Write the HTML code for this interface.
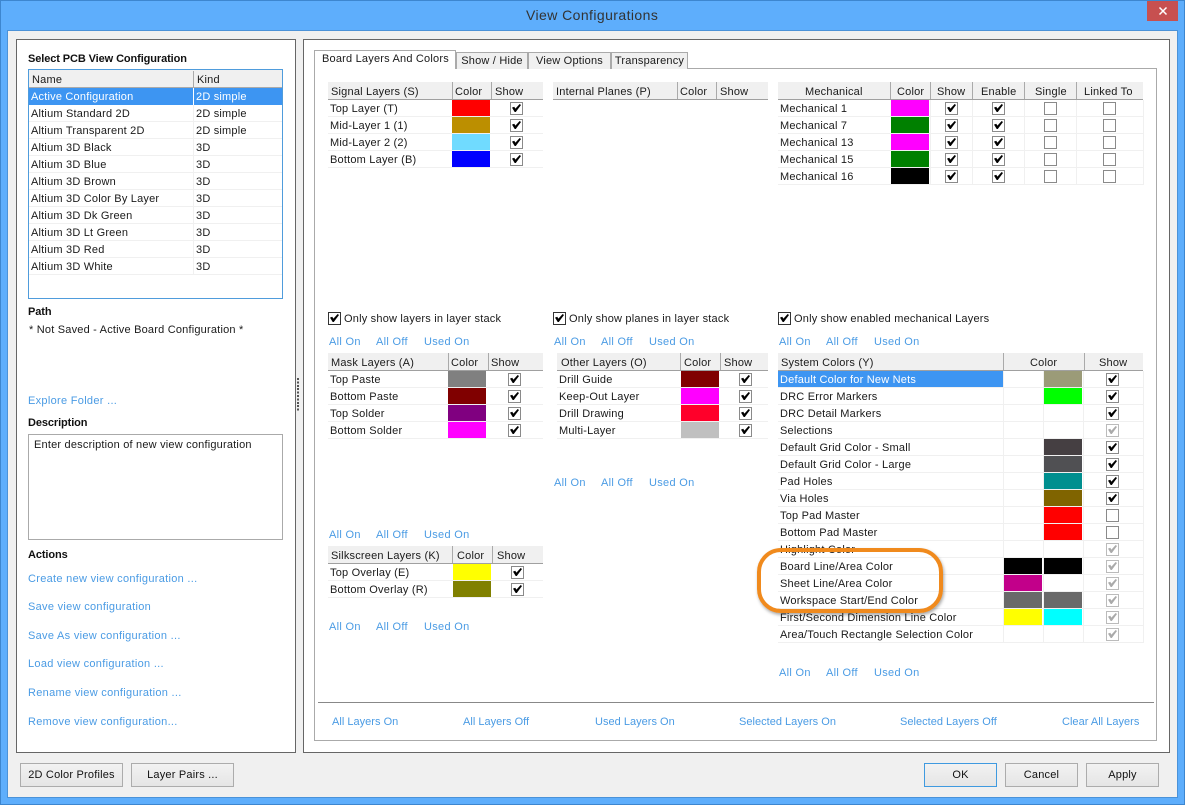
<!DOCTYPE html>
<html><head><meta charset="utf-8"><title>View Configurations</title>
<style>
html,body{margin:0;padding:0}
body{width:1185px;height:805px;position:relative;overflow:hidden;background:#5eaefc;font:11px/18px "Liberation Sans",sans-serif;letter-spacing:.2px;color:#1a1a1a}
div,span,b{position:absolute;white-space:nowrap;box-sizing:border-box}
.p{background:#fff;border:1px solid #666}
.a{color:#4a9be4;letter-spacing:.3px}
.z{letter-spacing:.02px}
.b{font-weight:bold;color:#111;letter-spacing:-.1px}
.h{background:#f0f0f0;border-bottom:1px solid #a0a0a0;height:18px}
.h span{top:1px}
.d{width:1px;background:#aaa;height:17px;top:0}
.r{height:17px;border-bottom:1px solid #f0f0f0}
.r>span.l{left:2px;top:0}
.s{top:0;height:16px;width:38px}
.c{top:2px;width:13px;height:13px;border:1px solid #8a8a8a;background:#fff}
.k::after{content:"";position:absolute;left:1px;top:1px;width:9px;height:8px;background:#000;clip-path:polygon(0 45%,25% 35%,38% 58%,85% 0,100% 12%,42% 100%,30% 100%)}
.g{border-color:#bbb}
.g::after{background:#aaa}
.v{width:1px;background:#f0f0f0}
.t{top:52px;height:17px;background:#f0f0f0;border:1px solid #aaa;border-bottom:0;text-align:center;line-height:16px}
.btn{top:763px;height:24px;width:73px;border:1px solid #acacac;background:linear-gradient(#f2f2f2,#e5e5e5);text-align:center;line-height:22px;color:#111}
</style></head><body>
<div style="left:0;top:0;width:1185px;height:805px;border:1px solid #3d86cf"></div>
<span style="left:526px;top:7px;font-size:14px;line-height:17px;letter-spacing:.42px;color:#333">View Configurations</span>
<div style="left:1147px;top:1px;width:31px;height:20px;background:#c75050"></div>
<svg style="position:absolute;left:1158px;top:6px" width="10" height="10" viewBox="0 0 10 10"><path d="M1.5 1.5L8.5 8.5M8.5 1.5L1.5 8.5" stroke="#fff" stroke-width="1.5"/></svg>
<div style="left:8px;top:31px;width:1169px;height:766px;background:#f0f0f0;box-shadow:0 0 0 1px #4b92d8"></div>

<!-- left panel -->
<div class="p" style="left:16px;top:39px;width:280px;height:714px"></div>
<span class="b" style="left:28px;top:50px">Select PCB View Configuration</span>
<div style="left:28px;top:69px;width:255px;height:230px;border:1px solid #4f9cdc;background:#fff"></div>
<div style="left:29px;top:70px;width:253px;height:18px;background:#f0f0f0;border-bottom:1px solid #aaa"></div>
<div style="left:193px;top:71px;width:1px;height:16px;background:#aaa"></div>
<span style="left:32px;top:71px">Name</span><span style="left:197px;top:71px">Kind</span>
<div style="left:29px;top:88px;width:253px;height:17px;background:#3d95f2"></div>
<div style="left:193px;top:88px;width:1px;height:187px;background:#f0f0f0"></div>
<div style="left:193px;top:88px;width:1px;height:17px;background:#fff"></div>
<div class="r" style="left:29px;top:105px;width:253px"></div><div class="r" style="left:29px;top:122px;width:253px"></div><div class="r" style="left:29px;top:139px;width:253px"></div><div class="r" style="left:29px;top:156px;width:253px"></div><div class="r" style="left:29px;top:173px;width:253px"></div><div class="r" style="left:29px;top:190px;width:253px"></div><div class="r" style="left:29px;top:207px;width:253px"></div><div class="r" style="left:29px;top:224px;width:253px"></div><div class="r" style="left:29px;top:241px;width:253px"></div><div class="r" style="left:29px;top:258px;width:253px"></div>
<span style="left:31px;top:88px;color:#fff">Active Configuration</span><span style="left:196px;top:88px;color:#fff">2D simple</span>
<span style="left:31px;top:105px">Altium Standard 2D</span><span style="left:196px;top:105px">2D simple</span>
<span style="left:31px;top:122px">Altium Transparent 2D</span><span style="left:196px;top:122px">2D simple</span>
<span style="left:31px;top:139px">Altium 3D Black</span><span style="left:196px;top:139px">3D</span>
<span style="left:31px;top:156px">Altium 3D Blue</span><span style="left:196px;top:156px">3D</span>
<span style="left:31px;top:173px">Altium 3D Brown</span><span style="left:196px;top:173px">3D</span>
<span style="left:31px;top:190px">Altium 3D Color By Layer</span><span style="left:196px;top:190px">3D</span>
<span style="left:31px;top:207px">Altium 3D Dk Green</span><span style="left:196px;top:207px">3D</span>
<span style="left:31px;top:224px">Altium 3D Lt Green</span><span style="left:196px;top:224px">3D</span>
<span style="left:31px;top:241px">Altium 3D Red</span><span style="left:196px;top:241px">3D</span>
<span style="left:31px;top:258px">Altium 3D White</span><span style="left:196px;top:258px">3D</span>
<span class="b" style="left:28px;top:303px">Path</span>
<span style="left:29px;top:321px">* Not Saved - Active Board Configuration *</span>
<span class="a" style="left:28px;top:392px">Explore Folder ...</span>
<span class="b" style="left:28px;top:414px">Description</span>
<div style="left:28px;top:434px;width:255px;height:106px;border:1px solid #aaa;background:#fff"></div>
<span style="left:34px;top:436px">Enter description of new view configuration</span>
<span class="b" style="left:28px;top:546px">Actions</span>
<span class="a" style="left:28px;top:570px">Create new view configuration ...</span>
<span class="a" style="left:28px;top:598px">Save view configuration</span>
<span class="a" style="left:28px;top:627px">Save As view configuration ...</span>
<span class="a" style="left:28px;top:655px">Load view configuration ...</span>
<span class="a" style="left:28px;top:684px">Rename view configuration ...</span>
<span class="a" style="left:28px;top:713px">Remove view configuration...</span>

<!-- splitter grip -->
<div style="left:297px;top:378px;width:2px;height:34px;background:repeating-linear-gradient(#555 0 2px,#f0f0f0 2px 3.4px)"></div>

<!-- right panel -->
<div class="p" style="left:303px;top:39px;width:867px;height:714px"></div>
<div style="left:314px;top:68px;width:843px;height:673px;border:1px solid #aaa;background:#fff"></div>
<div class="t" style="left:456px;width:72px">Show / Hide</div>
<div class="t" style="left:528px;width:83px">View Options</div>
<div class="t" style="left:611px;width:77px">Transparency</div>
<div style="left:314px;top:50px;width:142px;height:19px;background:#fff;border:1px solid #aaa;border-bottom:0"></div>
<span style="left:322px;top:50px">Board Layers And Colors</span>

<!-- Signal -->
<div class="h" style="left:328px;top:82px;width:215px"><span style="left:3px">Signal Layers (S)</span><div class="d" style="left:124px"></div><span style="left:127px">Color</span><div class="d" style="left:163px"></div><span style="left:167px">Show</span></div>
<div class="r" style="left:328px;top:100px;width:215px"><span class="l">Top Layer (T)</span><div class="s" style="left:124px;background:#f00"></div><div class="c k" style="left:182px"></div></div>
<div class="r" style="left:328px;top:117px;width:215px"><span class="l">Mid-Layer 1 (1)</span><div class="s" style="left:124px;background:#bc8f00"></div><div class="c k" style="left:182px"></div></div>
<div class="r" style="left:328px;top:134px;width:215px"><span class="l">Mid-Layer 2 (2)</span><div class="s" style="left:124px;background:#70dbff"></div><div class="c k" style="left:182px"></div></div>
<div class="r" style="left:328px;top:151px;width:215px"><span class="l">Bottom Layer (B)</span><div class="s" style="left:124px;background:#00f"></div><div class="c k" style="left:182px"></div></div>

<!-- Internal -->
<div class="h" style="left:553px;top:82px;width:215px"><span style="left:3px">Internal Planes (P)</span><div class="d" style="left:124px"></div><span style="left:127px">Color</span><div class="d" style="left:163px"></div><span style="left:167px">Show</span></div>

<!-- Mechanical -->
<div class="h" style="left:778px;top:82px;width:365px"><span style="left:27px">Mechanical</span><div class="d" style="left:112px"></div><span style="left:119px">Color</span><div class="d" style="left:152px"></div><span style="left:159px">Show</span><div class="d" style="left:194px"></div><span style="left:203px">Enable</span><div class="d" style="left:246px"></div><span style="left:257px">Single</span><div class="d" style="left:298px"></div><span style="left:306px">Linked To</span></div>
<div class="r" style="left:778px;top:100px;width:365px"><span class="l">Mechanical 1</span><div class="s" style="left:113px;background:#f0f"></div><div class="c k" style="left:167px"></div><div class="c k" style="left:214px"></div><div class="c" style="left:266px"></div><div class="c" style="left:325px"></div></div>
<div class="r" style="left:778px;top:117px;width:365px"><span class="l">Mechanical 7</span><div class="s" style="left:113px;background:#008000"></div><div class="c k" style="left:167px"></div><div class="c k" style="left:214px"></div><div class="c" style="left:266px"></div><div class="c" style="left:325px"></div></div>
<div class="r" style="left:778px;top:134px;width:365px"><span class="l">Mechanical 13</span><div class="s" style="left:113px;background:#f0f"></div><div class="c k" style="left:167px"></div><div class="c k" style="left:214px"></div><div class="c" style="left:266px"></div><div class="c" style="left:325px"></div></div>
<div class="r" style="left:778px;top:151px;width:365px"><span class="l">Mechanical 15</span><div class="s" style="left:113px;background:#008000"></div><div class="c k" style="left:167px"></div><div class="c k" style="left:214px"></div><div class="c" style="left:266px"></div><div class="c" style="left:325px"></div></div>
<div class="r" style="left:778px;top:168px;width:365px"><span class="l">Mechanical 16</span><div class="s" style="left:113px;background:#000"></div><div class="c k" style="left:167px"></div><div class="c k" style="left:214px"></div><div class="c" style="left:266px"></div><div class="c" style="left:325px"></div></div>
<div class="v" style="left:930px;top:100px;height:85px"></div><div class="v" style="left:972px;top:100px;height:85px"></div><div class="v" style="left:1024px;top:100px;height:85px"></div><div class="v" style="left:1076px;top:100px;height:85px"></div><div class="v" style="left:1143px;top:100px;height:85px"></div>

<!-- Only show -->
<div class="c k" style="left:328px;top:312px;border-color:#333"></div><span style="left:344px;top:310px">Only show layers in layer stack</span>
<div class="c k" style="left:553px;top:312px;border-color:#333"></div><span style="left:569px;top:310px">Only show planes in layer stack</span>
<div class="c k" style="left:778px;top:312px;border-color:#333"></div><span style="left:794px;top:310px">Only show enabled mechanical Layers</span>

<span class="a" style="left:329px;top:333px">All On</span><span class="a" style="left:376px;top:333px">All Off</span><span class="a" style="left:424px;top:333px">Used On</span>
<span class="a" style="left:554px;top:333px">All On</span><span class="a" style="left:601px;top:333px">All Off</span><span class="a" style="left:649px;top:333px">Used On</span>
<span class="a" style="left:779px;top:333px">All On</span><span class="a" style="left:826px;top:333px">All Off</span><span class="a" style="left:874px;top:333px">Used On</span>

<!-- Mask -->
<div class="h" style="left:328px;top:353px;width:215px"><span style="left:3px">Mask Layers (A)</span><div class="d" style="left:120px"></div><span style="left:123px">Color</span><div class="d" style="left:160px"></div><span style="left:163px">Show</span></div>
<div class="r" style="left:328px;top:371px;width:215px"><span class="l">Top Paste</span><div class="s" style="left:120px;background:#808080"></div><div class="c k" style="left:180px"></div></div>
<div class="r" style="left:328px;top:388px;width:215px"><span class="l">Bottom Paste</span><div class="s" style="left:120px;background:#800000"></div><div class="c k" style="left:180px"></div></div>
<div class="r" style="left:328px;top:405px;width:215px"><span class="l">Top Solder</span><div class="s" style="left:120px;background:#800080"></div><div class="c k" style="left:180px"></div></div>
<div class="r" style="left:328px;top:422px;width:215px"><span class="l">Bottom Solder</span><div class="s" style="left:120px;background:#f0f"></div><div class="c k" style="left:180px"></div></div>

<!-- Other -->
<div class="h" style="left:557px;top:353px;width:211px"><span style="left:4px">Other Layers (O)</span><div class="d" style="left:123px"></div><span style="left:127px">Color</span><div class="d" style="left:163px"></div><span style="left:167px">Show</span></div>
<div class="r" style="left:557px;top:371px;width:211px"><span class="l">Drill Guide</span><div class="s" style="left:124px;background:#800000"></div><div class="c k" style="left:182px"></div></div>
<div class="r" style="left:557px;top:388px;width:211px"><span class="l">Keep-Out Layer</span><div class="s" style="left:124px;background:#f0f"></div><div class="c k" style="left:182px"></div></div>
<div class="r" style="left:557px;top:405px;width:211px"><span class="l">Drill Drawing</span><div class="s" style="left:124px;background:#ff002a"></div><div class="c k" style="left:182px"></div></div>
<div class="r" style="left:557px;top:422px;width:211px"><span class="l">Multi-Layer</span><div class="s" style="left:124px;background:#c0c0c0"></div><div class="c k" style="left:182px"></div></div>

<span class="a" style="left:554px;top:474px">All On</span><span class="a" style="left:601px;top:474px">All Off</span><span class="a" style="left:649px;top:474px">Used On</span>
<span class="a" style="left:329px;top:526px">All On</span><span class="a" style="left:376px;top:526px">All Off</span><span class="a" style="left:424px;top:526px">Used On</span>

<!-- Silkscreen -->
<div class="h" style="left:328px;top:546px;width:215px"><span style="left:3px">Silkscreen Layers (K)</span><div class="d" style="left:124px"></div><span style="left:129px">Color</span><div class="d" style="left:164px"></div><span style="left:169px">Show</span></div>
<div class="r" style="left:328px;top:564px;width:215px"><span class="l">Top Overlay (E)</span><div class="s" style="left:125px;background:#ff0"></div><div class="c k" style="left:183px"></div></div>
<div class="r" style="left:328px;top:581px;width:215px"><span class="l">Bottom Overlay (R)</span><div class="s" style="left:125px;background:#808000"></div><div class="c k" style="left:183px"></div></div>
<span class="a" style="left:329px;top:618px">All On</span><span class="a" style="left:376px;top:618px">All Off</span><span class="a" style="left:424px;top:618px">Used On</span>

<!-- System -->
<div class="h" style="left:778px;top:353px;width:365px"><span style="left:3px">System Colors (Y)</span><div class="d" style="left:225px"></div><span style="left:252px">Color</span><div class="d" style="left:306px"></div><span style="left:321px">Show</span></div>
<div class="r" style="left:778px;top:371px;width:365px"><div style="left:0;top:0;width:225px;height:16px;background:#3d95f2"></div><span class="l" style="color:#fff">Default Color for New Nets</span><div class="s" style="left:266px;background:#9b9b78"></div><div class="c k" style="left:328px"></div></div>
<div class="r" style="left:778px;top:388px;width:365px"><span class="l">DRC Error Markers</span><div class="s" style="left:266px;background:#0f0"></div><div class="c k" style="left:328px"></div></div>
<div class="r" style="left:778px;top:405px;width:365px"><span class="l">DRC Detail Markers</span><div class="c k" style="left:328px"></div></div>
<div class="r" style="left:778px;top:422px;width:365px"><span class="l">Selections</span><div class="c k g" style="left:328px"></div></div>
<div class="r" style="left:778px;top:439px;width:365px"><span class="l">Default Grid Color - Small</span><div class="s" style="left:266px;background:#453f42"></div><div class="c k" style="left:328px"></div></div>
<div class="r" style="left:778px;top:456px;width:365px"><span class="l">Default Grid Color - Large</span><div class="s" style="left:266px;background:#505053"></div><div class="c k" style="left:328px"></div></div>
<div class="r" style="left:778px;top:473px;width:365px"><span class="l">Pad Holes</span><div class="s" style="left:266px;background:#008f8f"></div><div class="c k" style="left:328px"></div></div>
<div class="r" style="left:778px;top:490px;width:365px"><span class="l">Via Holes</span><div class="s" style="left:266px;background:#806400"></div><div class="c k" style="left:328px"></div></div>
<div class="r" style="left:778px;top:507px;width:365px"><span class="l">Top Pad Master</span><div class="s" style="left:266px;background:#f00"></div><div class="c" style="left:328px"></div></div>
<div class="r" style="left:778px;top:524px;width:365px"><span class="l">Bottom Pad Master</span><div class="s" style="left:266px;background:#f00"></div><div class="c" style="left:328px"></div></div>
<div class="r" style="left:778px;top:541px;width:365px"><span class="l">Highlight Color</span><div class="c k g" style="left:328px"></div></div>
<div class="r" style="left:778px;top:558px;width:365px"><span class="l">Board Line/Area Color</span><div class="s" style="left:226px;background:#000"></div><div class="s" style="left:266px;background:#000"></div><div class="c k g" style="left:328px"></div></div>
<div class="r" style="left:778px;top:575px;width:365px"><span class="l">Sheet Line/Area Color</span><div class="s" style="left:226px;background:#c2008a"></div><div class="c k g" style="left:328px"></div></div>
<div class="r" style="left:778px;top:592px;width:365px"><span class="l">Workspace Start/End Color</span><div class="s" style="left:226px;background:#696969"></div><div class="s" style="left:266px;background:#696969"></div><div class="c k g" style="left:328px"></div></div>
<div class="r" style="left:778px;top:609px;width:365px"><span class="l">First/Second Dimension Line Color</span><div class="s" style="left:226px;background:#ff0"></div><div class="s" style="left:266px;background:#0ff"></div><div class="c k g" style="left:328px"></div></div>
<div class="r" style="left:778px;top:626px;width:365px"><span class="l">Area/Touch Rectangle Selection Color</span><div class="c k g" style="left:328px"></div></div>
<div class="v" style="left:1003px;top:371px;height:272px"></div><div class="v" style="left:1043px;top:371px;height:272px"></div><div class="v" style="left:1083px;top:371px;height:272px"></div><div class="v" style="left:1143px;top:371px;height:272px"></div>
<span class="a" style="left:779px;top:664px">All On</span><span class="a" style="left:826px;top:664px">All Off</span><span class="a" style="left:874px;top:664px">Used On</span>

<!-- Callout -->
<div style="left:757px;top:548px;width:186px;height:65px;border:4.5px solid #f08a1d;border-radius:24px;box-shadow:1px 2px 3px rgba(0,0,0,.35)"></div>

<!-- Bottom links -->
<div style="left:318px;top:702px;width:836px;height:1px;background:#888"></div>
<span class="a z" style="left:332px;top:713px">All Layers On</span>
<span class="a z" style="left:463px;top:713px">All Layers Off</span>
<span class="a z" style="left:595px;top:713px">Used Layers On</span>
<span class="a z" style="left:739px;top:713px">Selected Layers On</span>
<span class="a z" style="left:900px;top:713px">Selected Layers Off</span>
<span class="a z" style="left:1062px;top:713px">Clear All Layers</span>

<!-- Buttons -->
<div class="btn" style="left:20px;width:103px">2D Color Profiles</div>
<div class="btn" style="left:131px;width:103px">Layer Pairs ...</div>
<div class="btn" style="left:924px;border-color:#3f9ae0">OK</div>
<div class="btn" style="left:1005px">Cancel</div>
<div class="btn" style="left:1086px">Apply</div>
</body></html>
